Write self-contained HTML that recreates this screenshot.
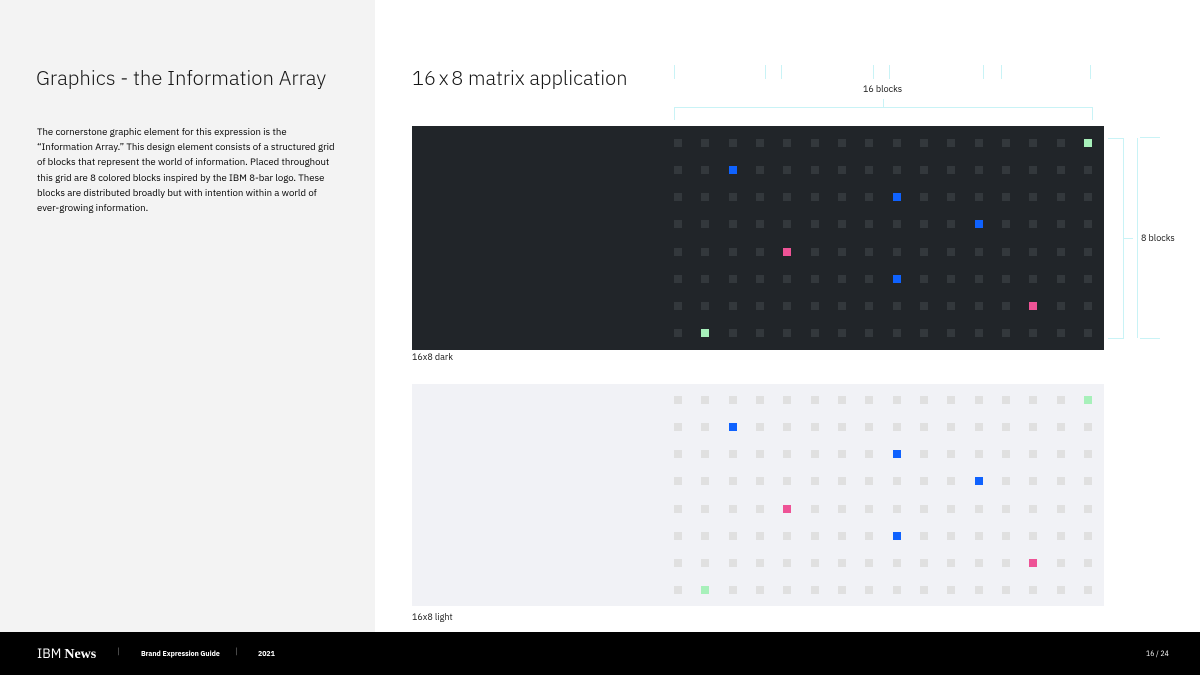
<!DOCTYPE html>
<html><head><meta charset="utf-8"><style>
*{margin:0;padding:0;box-sizing:border-box}
body{width:1200px;height:675px;position:relative;overflow:hidden;background:#fff;font-family:"IBM Plex Sans","Liberation Sans",sans-serif;color:#161616}
.side{position:absolute;left:0;top:0;width:375px;height:632px;background:#f3f3f3}
h1{position:absolute;left:36px;top:64px;font-size:20.3px;font-weight:300;letter-spacing:0}
.p{position:absolute;left:37px;top:124px;width:304px;font-size:9.6px;line-height:15.2px;color:#000;hyphens:manual}
h2{position:absolute;left:412px;top:64px;font-size:20px;font-weight:300;white-space:nowrap}
.panel{position:absolute;left:412px;width:692px}
.b{position:absolute;width:8px;height:8px}
.lbl{position:absolute;font-size:9px}
.foot{position:absolute;left:0;top:632px;width:1200px;height:43px;background:#000;color:#fff}
.foot span{position:absolute;top:15px}
</style></head><body>
<div class="side"></div>
<h1>Graphics - the Information Array</h1>
<div class="p">The cornerstone graphic element for this expression is the “Information Array.” This design element consists of a structured grid of blocks that represent the world of information. Placed throughout this grid are 8 colored blocks inspired by the IBM 8-bar logo. These blocks are distributed broadly but with intention within a world of <span style="white-space:nowrap">ever-growing</span> information.</div>
<h2><span style="word-spacing:-2px">16 x 8</span> matrix application</h2>
<svg style="position:absolute;left:0;top:0" width="1200" height="632">
<g stroke="#c9f3f6" stroke-width="1" fill="none">
<path d="M674.5 65V79M765.5 65V79M781.5 65V79M873.5 65V79M889.5 65V79M983.5 65V79M1001.5 65V79M1090.5 65V79"/>
<path d="M674.5 120V107.5H1092.5V120M883.5 107V99"/>
<path d="M1108 138.5H1123.5V338.5H1108M1123 238.5H1133M1137.5 138V338M1140 137.5H1160M1140 338.5H1160"/>
</g></svg>
<div class="lbl" style="left:863px;top:84px">16 blocks</div>
<div class="lbl" style="left:1141px;top:233px">8 blocks</div>
<div class="panel" id="d" style="top:126px;height:224px;background:#212529"></div>
<div class="lbl" style="left:412px;top:352px">16x8 dark</div>
<div class="panel" id="l" style="top:384px;height:222px;background:#f1f2f6"></div>
<div class="lbl" style="left:412px;top:612px">16x8 light</div>
<div class="foot">
<span style="left:37px;top:13px;font-size:13px">IBM <b style="font-family:'Liberation Serif',serif;font-size:14px">News</b></span>
<span style="left:117px;font-size:8px;color:#888">|</span>
<span style="left:141px;font-size:7px;font-weight:bold;top:17px">Brand Expression Guide</span>
<span style="left:235px;font-size:8px;color:#888">|</span>
<span style="left:258px;font-size:7px;font-weight:bold;top:17px">2021</span>
<span style="left:1146px;font-size:7px;top:17px">16 / 24</span>
</div>
<script>
var col={"0,15":"#a7f0ba","1,2":"#0f62fe","2,8":"#0f62fe","3,11":"#0f62fe","4,4":"#ee5396","5,8":"#0f62fe","6,13":"#ee5396","7,1":"#a7f0ba"};
function g(id,top,base){var e=document.getElementById(id),h="";for(var r=0;r<8;r++)for(var c=0;c<16;c++){var x=262+c*27.33,y=top+r*27.15;h+='<div class="b" style="left:'+x.toFixed(1)+'px;top:'+y.toFixed(1)+'px;background:'+(col[r+","+c]||base)+'"></div>';}e.innerHTML=h;}
g("d",13,"#33383c");g("l",12,"#e0e0e0");
</script>
</body></html>
